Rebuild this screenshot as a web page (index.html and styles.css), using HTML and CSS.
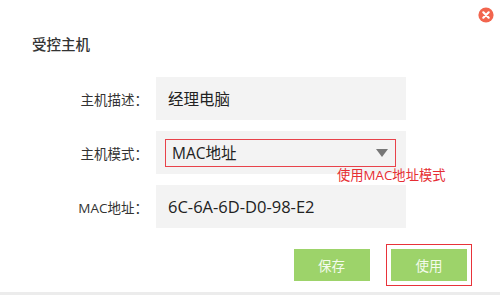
FILE: index.html
```html
<!DOCTYPE html>
<html>
<head>
<meta charset="utf-8">
<link rel="stylesheet" href="styles.css">
</head>
<body>
<div class="dialog">
  <div class="topbar">
    <svg class="close" width="16" height="16" viewBox="0 0 16 16">
      <circle cx="8" cy="8" r="7.6" fill="#f2654e"/>
      <path d="M5.3 5.3 L10.7 10.7 M10.7 5.3 L5.3 10.7" stroke="#fff" stroke-width="2.2" stroke-linecap="round"/>
    </svg>
  </div>
  <div class="title">受控主机</div>
  <div class="form">
    <div class="row">
      <div class="label">主机描述：</div>
      <div class="field"><span class="value">经理电脑</span></div>
    </div>
    <div class="row">
      <div class="label">主机模式：</div>
      <div class="field select-field">
        <div class="select">
          <span class="value">MAC地址</span>
          <span class="arrow"></span>
        </div>
      </div>
      <div class="note">使用MAC地址模式</div>
    </div>
    <div class="row">
      <div class="label">MAC地址：</div>
      <div class="field"><span class="value latin">6C-6A-6D-D0-98-E2</span></div>
    </div>
  </div>
  <div class="actions">
    <div class="btn-wrap"><button class="btn">保存</button></div>
    <div class="btn-wrap marked"><button class="btn">使用</button></div>
  </div>
  <div class="bottomline"></div>
</div>
</body>
</html>
```

FILE: styles.css
```css
* { box-sizing: border-box; }
html, body { margin: 0; padding: 0; background: #fff; }
body {
  width: 500px;
  height: 295px;
  overflow: hidden;
  font-family: "Open Sans", "Noto Sans CJK SC", sans-serif;
  color: #333;
}
.dialog {
  width: 500px;
  height: 295px;
  display: flex;
  flex-direction: column;
}
.topbar {
  height: 30px;
  display: flex;
  justify-content: flex-end;
  align-items: flex-start;
  padding: 7px 6px 0 0;
}
.close { display: block; }
.title {
  padding-left: 32px;
  margin-top: 6px;
  height: 18px;
  line-height: 18px;
  font-size: 14.5px;
  color: #333;
  font-weight: 500;
}
.form {
  margin-top: 23px;
  display: flex;
  flex-direction: column;
  gap: 11px;
}
.row {
  position: relative;
  display: flex;
  align-items: center;
  height: 43px;
}
.label {
  width: 156px;
  padding-right: 8px;
  text-align: right;
  font-size: 13.5px;
  color: #333;
}
.field {
  width: 250px;
  height: 43px;
  background: #f3f3f3;
  display: flex;
  align-items: center;
  padding-left: 12px;
  font-size: 15.5px;
  color: #222;
}
.latin { font-size: 16.5px; }
.select-field { padding: 0 10px 0 9px; }
.select {
  flex: 1;
  height: 28px;
  border: 1.5px solid #e8424a;
  display: flex;
  align-items: center;
  justify-content: space-between;
  padding: 0 7px 0 6px;
}
.arrow {
  width: 0;
  height: 0;
  border-left: 6px solid transparent;
  border-right: 6px solid transparent;
  border-top: 8px solid #777;
}
.note {
  position: absolute;
  left: 337px;
  top: 34px;
  font-size: 13.3px;
  color: #e62e33;
  white-space: nowrap;
}
.actions {
  margin-top: 16px;
  display: flex;
  justify-content: flex-end;
  align-items: center;
  gap: 11.5px;
  padding-right: 28px;
  height: 41px;
}
.btn-wrap {
  padding: 4px;
  border: 1.5px solid transparent;
}
.btn-wrap.marked { border-color: #e8333a; }
.btn {
  width: 76px;
  height: 32px;
  border: none;
  background: #9dd36a;
  color: #f4fbec;
  font-family: inherit;
  font-size: 13.5px;
  padding: 0;
}
.bottomline {
  margin-top: auto;
  height: 3px;
  background: #ececec;
}
```
